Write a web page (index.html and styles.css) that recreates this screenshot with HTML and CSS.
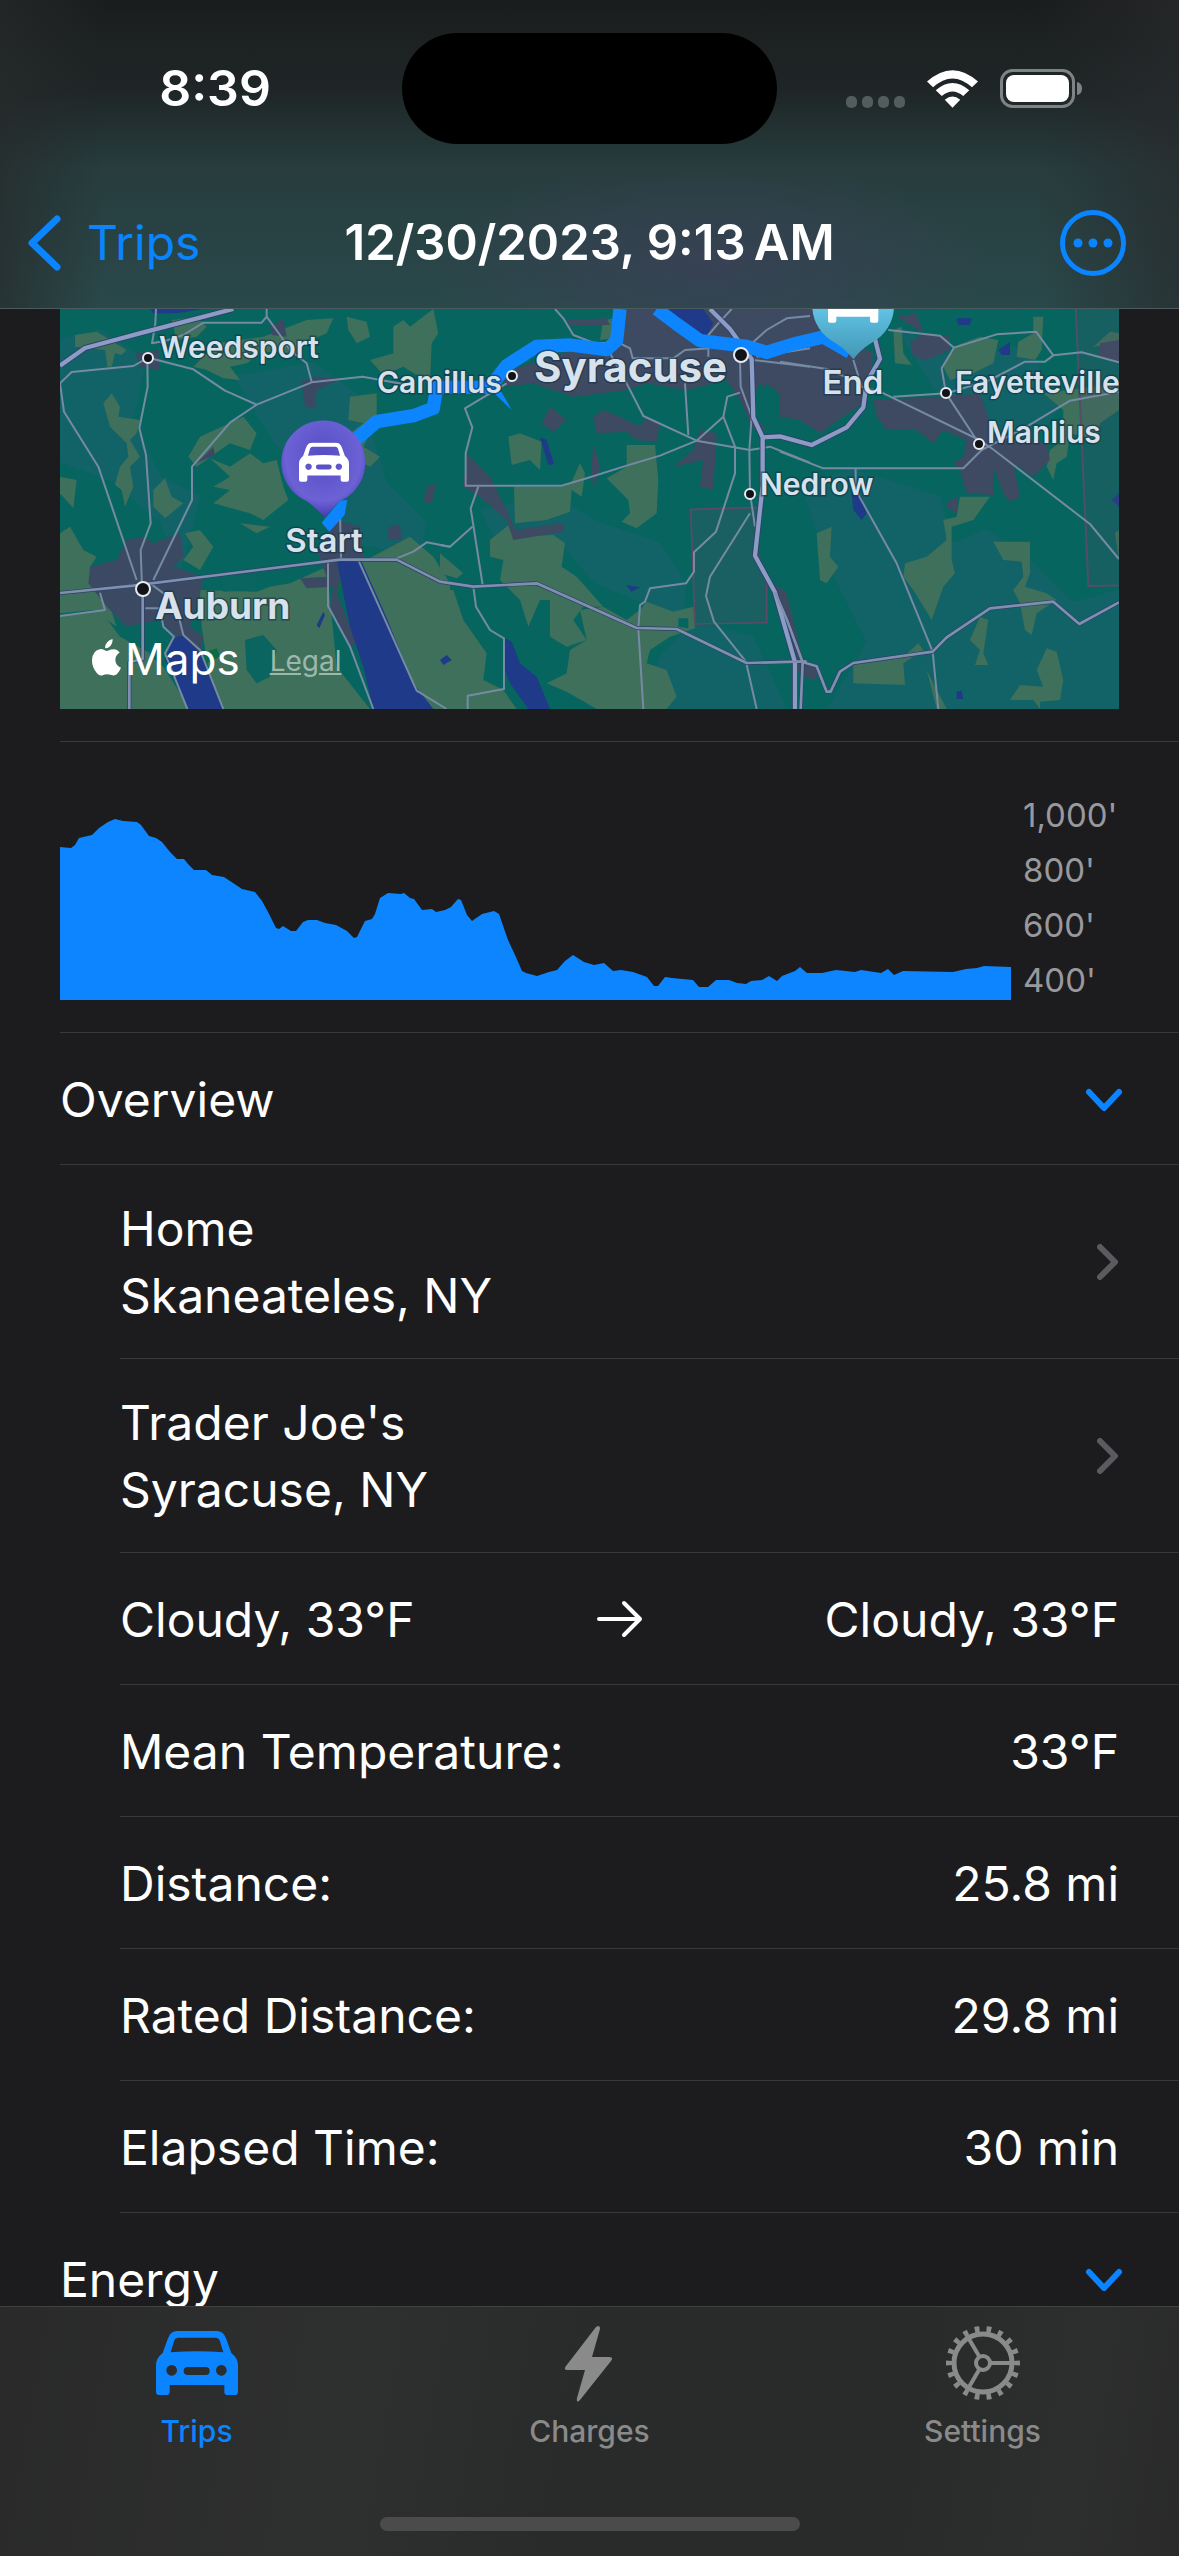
FILE: index.html
```html
<!DOCTYPE html>
<html lang="en">
<head>
    <meta charset="UTF-8">
    <meta name="viewport" content="width=device-width, initial-scale=1.0">
    <title>Trip Details</title>
    <link rel="stylesheet" href="styles.css">
</head>
<body>
    <!-- Shared icons -->
    <svg class="icon-defs" aria-hidden="true">
        <symbol id="icon-car" viewBox="0 0 246 192">
            <path fill-rule="evenodd" d="M0 182V102Q0 82 20 66L36 22Q44 0 64 0H182Q202 0 210 22L226 66Q246 82 246 102V182Q246 192 236 192H215Q205 192 205 182V162H41V182Q41 192 31 192H10Q0 192 0 182ZM44 64Q123 58 202 64L191 28Q188 20 180 20H66Q58 20 55 28ZM47 102a16 16 0 1 0 .1 0ZM196 102a16 16 0 1 0 .1 0ZM95 108H149a12 12 0 0 1 0 24H95a12 12 0 0 1 0-24Z"/>
        </symbol>
        <symbol id="icon-down" viewBox="0 0 38 25">
            <path d="M4 5L19 21L34 5" fill="none" stroke="currentColor" stroke-width="6" stroke-linecap="round" stroke-linejoin="round"/>
        </symbol>
        <symbol id="icon-right" viewBox="0 0 22 36">
            <path d="M3 3L18 18L3 33" fill="none" stroke="currentColor" stroke-width="6" stroke-linecap="round" stroke-linejoin="round"/>
        </symbol>
    </svg>

    <div class="app">
        <header class="header">
            <div class="status-bar">
                <span class="status-time">8:39</span>
                <div class="island"></div>
                <div class="status-icons">
                    <svg class="icon-signal" viewBox="0 0 59 12">
                        <rect x="0" y="0" width="11" height="12" rx="5"/>
                        <rect x="16" y="0" width="11" height="12" rx="5"/>
                        <rect x="32" y="0" width="11" height="12" rx="5"/>
                        <rect x="48" y="0" width="11" height="12" rx="5"/>
                    </svg>
                    <svg class="icon-wifi" viewBox="0 0 152 112">
                        <path d="M0 34Q76 -34 152 34L134 51Q76 -2 18 51Z"/>
                        <path d="M26 60Q76 16 126 60L108 77Q76 50 44 77Z"/>
                        <path d="M53 88Q76 68 99 88L76 112Z"/>
                    </svg>
                    <svg class="icon-battery" viewBox="0 0 82 39">
                        <rect x="1.5" y="1.5" width="72" height="36" rx="11" fill="none" stroke="#7e8485" stroke-width="3"/>
                        <rect x="6" y="6" width="63" height="27" rx="8"/>
                        <path d="M77 13Q82 14 82 19.500Q82 25 77 26Z" fill="#7e8485"/>
                    </svg>
                </div>
            </div>
            <nav class="nav-bar">
                <button type="button" class="back-btn">
                    <svg class="icon-back" viewBox="0 0 34 56">
                        <path d="M30 4L5 28L30 52" fill="none" stroke="currentColor" stroke-width="7" stroke-linecap="round" stroke-linejoin="round"/>
                    </svg>
                    Trips
                </button>
                <h1 class="nav-title">12/30/2023, 9:13&#8239;AM</h1>
                <button type="button" class="more-btn" aria-label="More">
                    <svg class="icon-more" viewBox="0 0 66 66">
                        <circle cx="33" cy="33" r="30.500" fill="none" stroke="currentColor" stroke-width="5"/>
                        <circle cx="18" cy="33" r="4.500"/>
                        <circle cx="33" cy="33" r="4.500"/>
                        <circle cx="48" cy="33" r="4.500"/>
                    </svg>
                </button>
            </nav>
        </header>

        <main class="content">
            <section class="map-row">
                <div class="map">
                    <svg class="map-canvas" viewBox="0 0 1059 400" preserveAspectRatio="xMidYMid slice">
                        <defs>
                            <radialGradient id="pinStart" cx=".5" cy=".38" r=".6">
                                <stop offset="0" stop-color="#564cc2"/>
                                <stop offset=".75" stop-color="#6c62d6"/>
                                <stop offset="1" stop-color="#4c3eb4"/>
                            </radialGradient>
                            <linearGradient id="pinEnd" x1="0" y1="0" x2="0" y2="1">
                                <stop offset="0" stop-color="#62c4e6"/>
                                <stop offset="1" stop-color="#4296b4"/>
                            </linearGradient>
                        </defs>
                        <rect width="1059" height="400" fill="#07655f"/>

                        <g transform="scale(.33333)">
                            <!-- Forest shading -->
                            <g fill="#15636a" opacity=".75">
                                <path d="M0 90L120 60L260 150L220 330L300 500L420 560L360 800L300 640L160 520L0 460Z"/>
                                <path d="M520 200L760 160L900 260L980 520L1100 640L1080 740L860 700L760 520L640 400Z"/>
                                <path d="M1260 600L1480 560L1620 640L1800 700L1880 820L1860 980L1740 880L1600 820L1500 700L1300 680Z"/>
                                <path d="M1900 940L2080 980L2180 1200L1740 1200L1800 1040Z"/>
                                <path d="M2220 520L2380 480L2640 560L2680 700L2780 660L2920 760L3040 880L3177 840V1200H2300L2420 1000L2300 760Z"/>
                                <path d="M2500 40L2700 160L2900 100L3000 300L2900 420L2740 380L2620 240Z"/>
                            </g>

                            <!-- West -->
                            <g transform="translate(-30 -27)">
                                <g fill="#3e705c">
                                    <path d="M75 105L140 95L230 150L215 165L195 160L185 200L172 200L165 150L75 140Z"/>
                                    <path d="M365 60L440 50L470 80L440 110L380 120Z"/>
                                    <path d="M430 200L500 130L640 110L770 60L850 55L830 100L760 130L740 160L640 155L590 190L540 200L570 240L520 235L470 210Z"/>
                                    <path d="M890 50L950 65L960 110L920 130L895 90Z"/>
                                    <path d="M1030 80L1060 60L1080 80L1150 27L1165 100L1145 130L1140 250L1060 200L1000 225L960 180L1030 160Z"/>
                                    <path d="M160 310L185 280L210 320L205 350L270 360L260 400L240 420L270 470L240 500L250 560L225 620L215 570L195 555L210 500L235 470L230 430L180 380Z"/>
                                    <path d="M310 570L345 535L365 590L400 610L345 655L310 620Z"/>
                                    <path d="M30 530L80 540L70 625L30 580Z"/>
                                    <path d="M540 500L600 460L640 490L680 480L700 560L715 600L640 660L600 640L490 610L540 570L490 560L540 530L480 475Z"/>
                                    <path d="M415 470L450 410L580 350L620 400L600 450L540 430L440 500Z"/>
                                    <path d="M405 700L450 690L490 740L450 810L400 780L430 740Z"/>
                                    <path d="M900 290L980 280L980 360L940 440L990 470L960 500L900 470L900 400L940 370L895 360Z"/>
                                    <path d="M570 670L660 680L620 700Z"/>
                                    <path d="M30 700L60 680L100 750L140 770L120 800L160 860L200 980L130 930L30 940Z"/>
                                    <path d="M30 945L150 930L210 1010L300 1060L290 1227H30Z"/>
                                    <path d="M290 1060L340 1100L420 1227H280Z"/>
                                    <path d="M450 870L620 875L660 860L720 850L830 800L860 1100L960 1227H510L470 1080L455 980Z"/>
                                    <path d="M930 790L1080 710L1150 770L1200 850V1227H1130L1060 1100Z"/>
                                </g>
                                <g fill="#0a645f">
                                    <path d="M585 1020L640 1005L680 1050L660 1130L620 1150L590 1110Z"/>
                                    <path d="M510 820L620 810L625 870L520 875Z"/>
                                </g>
                                <path fill="#0b6b45" d="M455 1060L500 1045L510 1070L470 1090ZM840 845L880 845L870 870L845 865Z"/>
                                <g fill="#3b4a62">
                                    <path d="M120 800L200 780L230 720L280 710L310 730L390 700L400 770L370 800L460 830L450 880L420 980L460 1010L450 1060L380 1010L330 960L230 980L170 920L115 850Z"/>
                                    <path d="M800 750L860 660L930 680L940 770L880 800L860 880L920 1030L900 1040L840 920L850 860L770 865L750 835L830 830Z"/>
                                    <path d="M255 160L325 150L330 210L270 200ZM660 80L700 55L710 110L665 105Z"/>
                                    <path d="M755 245L790 230L880 235L800 270L795 325L765 320ZM1015 680L1050 675L1055 720L1015 720ZM1130 560L1160 550L1145 610L1120 605ZM440 490L490 440L495 465Z"/>
                                </g>
                                <g fill="#1e3a88">
                                    <path d="M300 27H460L380 40L310 40Z"/>
                                    <path d="M860 780L935 785L1000 930L1090 1150L1150 1227H970L940 1100L900 980Z"/>
                                    <path d="M370 1015L400 1005L450 1060L520 1227H415L345 1080Z"/>
                                    <path d="M800 975L820 935L825 945L808 985ZM1175 1080L1200 1065V1095Z"/>
                                </g>
                            </g>

                            <!-- Center -->
                            <g transform="translate(1140 -27)">
                                <g fill="#3e705c">
                                    <path d="M490 60L560 50L600 70L560 110L480 120Z"/>
                                    <path d="M205 410L240 400L305 425L300 510L270 480L215 495Z"/>
                                    <path d="M560 435H645L655 540L650 640L590 685L545 665L570 640L565 600L500 535L560 500Z"/>
                                    <path d="M222 560L360 560L395 545L420 490L435 520L425 590L395 570L390 635L320 660L225 670Z"/>
                                    <path d="M150 720L205 675L220 710L340 705L375 730L365 800L410 830L490 920L430 920L400 960L440 1020L380 1040L330 1010L330 900L300 900L265 980L240 900L180 840L190 780L150 770Z"/>
                                    <path d="M0 760L70 820L50 835L0 820ZM0 870L40 870L70 960L140 1060L130 1140L190 1170L230 1227H0Z"/>
                                    <path d="M600 930L620 905L700 935L760 920L765 985L690 1010L630 1050L620 1090L680 1110L710 1190L680 1227H470L380 1175L320 1150L380 1120L390 1050L440 1020L420 930L490 920L560 960Z"/>
                                </g>
                                <path fill="#07655f" d="M715 955L745 955L745 985L715 980Z"/>
                                <g fill="#3e4a62">
                                    <path d="M560 27H1110V330L1060 300L1010 290L960 250L920 330L980 390L940 390L900 300L860 240L740 270L620 250L560 270L400 290L280 250L200 260L180 220L400 150L500 165L540 110Z"/>
                                    <path d="M460 350L490 330L540 350L600 380L620 350L660 365L650 425L590 420L560 395L470 400Z"/>
                                    <path d="M305 370L330 320L380 360L340 395ZM80 460L150 530L200 630L225 690L370 670L370 695L220 720L200 660L120 590L70 560Z"/>
                                    <path d="M780 390L830 400L820 570L780 560L790 480L700 500L760 450ZM460 430L480 500L460 570L455 500ZM380 60L500 55L510 75L390 75Z"/>
                                    <path d="M1000 850L1040 880L1060 960L1100 1130L1060 1100Z"/>
                                </g>
                                <g fill="#07655f">
                                    <path d="M980 250L1030 290L1010 360L960 320ZM780 290L840 270L840 300L790 310Z"/>
                                </g>
                                <g fill="#1e3a88">
                                    <path d="M670 27H790L820 70L800 110L700 60Z"/>
                                    <path d="M300 412L320 420L342 492L325 495ZM558 855L600 862L575 875Z"/>
                                    <path d="M195 1015L215 1025L240 1090L290 1130L330 1227H265L210 1150L190 1100ZM0 1080L20 1065L35 1080L10 1095Z"/>
                                </g>
                                <path fill="#54506a" fill-opacity=".25" stroke="#5d4a66" stroke-width="5" d="M752 628L960 622L945 740L980 830V968L765 972Z"/>
                            </g>

                            <!-- East -->
                            <g transform="translate(2160 -27)">
                                <g fill="#3e705c">
                                    <path d="M520 140L600 110L655 120L640 190L580 220L510 240L490 200Z"/>
                                    <path d="M760 50H790L785 150L765 180L710 170L715 125L760 100Z"/>
                                    <path d="M340 90L365 80L370 160L395 195L345 190ZM940 140L990 95L1017 100V130Z"/>
                                    <path d="M790 280L1017 250V330L960 370L950 420L870 400L860 470L830 490L820 540L800 500L810 450L850 420L850 330Z"/>
                                    <path d="M540 590H630L580 660L515 680L515 780L525 820L490 860L455 960L400 870L370 830L375 790L440 770L500 720L490 660L530 650Z"/>
                                    <path d="M640 725H750V820L735 860L800 880L830 900L770 940L755 1005L735 990L720 910L700 870L730 830L725 785L670 780Z"/>
                                    <path d="M110 700L155 680L150 770L175 800L140 850L120 840Z"/>
                                    <path d="M220 1090L370 1070L415 1030L430 1050L370 1090L375 1155L220 1150ZM600 950L625 960L610 1060L625 1095H585L600 1050L570 1020Z"/>
                                    <path d="M690 1200L720 1155L790 1160L770 1110L800 1045L830 1055L850 1140L840 1200L780 1205V1227L760 1200ZM440 1110L500 1227H470ZM1005 700L1017 690V780Z"/>
                                </g>
                                <g fill="#3e4a62">
                                    <path d="M0 27H140L200 120L280 160L260 300L120 400L60 360L0 350Z"/>
                                    <path d="M350 50L410 40L430 100L510 110L510 150L440 180L400 170L390 130L430 100Z"/>
                                    <path d="M280 300L490 290L600 280L640 400L800 430L810 480L760 530L700 490L720 590L690 605L670 580L640 500L640 585L560 580L540 510L520 490L550 470L560 420L490 390L460 430L410 390L320 390L290 350Z"/>
                                    <path d="M500 605L535 590L530 640L500 620ZM960 130L1017 120V190L960 170ZM60 1080L110 1100L110 1140L70 1130Z"/>
                                </g>
                                <g fill="#1e3a88">
                                    <path d="M530 55L575 55L570 75L535 75ZM655 150L690 125V165L665 165ZM215 580L245 590L260 640L245 660L220 630Z"/>
                                    <path d="M995 600L1017 580V620ZM530 1175L545 1172L550 1197H530Z"/>
                                </g>
                                <path fill="#54506a" fill-opacity=".2" stroke="#4f4f68" stroke-width="6" d="M887 20L925 858L1030 856V20Z"/>
                            </g>

                            <!-- Local roads -->
                            <g fill="none" stroke="#768ba3" stroke-width="6" stroke-linejoin="round">
                                <g transform="translate(-30 -27)">
                                    <path d="M318 27L316 70L306 130L330 125M330 128L400 105L460 68H635L650 50V27M650 50L690 105L720 150L770 190L785 245"/>
                                    <path d="M295 173L250 198L65 216L30 250L42 335L145 500L260 840"/>
                                    <path d="M292 173L293 260L268 385L288 465L302 670L272 750L276 860"/>
                                    <path d="M295 173L430 208L525 272L620 314L785 247L938 230L1080 256"/>
                                    <path d="M620 314L540 368L426 500V600L310 840"/>
                                    <path d="M30 948L165 930L150 878M286 925H330L340 980L372 1010L345 1060L412 1227M300 850L375 905L400 1005L450 1050L520 1227"/>
                                    <path d="M870 640L873 775M834 780V918L900 1040L970 1227M925 780L1090 1150L1100 1172L1190 1227M1040 775L1090 755L1130 727L1200 740"/>
                                </g>
                                <g transform="translate(1140 -27)">
                                    <path d="M345 27L370 55L400 105L460 128L540 130L570 145L578 175H700L735 150L810 145M805 170V105L835 70L875 27"/>
                                    <path d="M200 250L75 325L97 382L77 460V557H365L440 535L560 497L660 467L770 422L850 350L862 290L900 278"/>
                                    <path d="M510 160L560 250L610 348L770 422L930 450L990 440L1110 488M735 250L745 405"/>
                                    <path d="M850 350L885 440V520L828 695L762 757V815L738 850L630 865L615 905L600 915L595 985L610 1227"/>
                                    <path d="M115 560L92 625L128 855M97 680L30 740L0 735M100 860L108 920L150 990L192 1015V1167L83 1187V1227"/>
                                    <path d="M930 640L810 830L798 888L822 965L918 1085L950 1227M900 180L902 260L935 350L928 450L930 580L945 680"/>
                                    <path d="M930 135L980 90L1040 55L1110 48M940 180L1110 200M950 170L1110 145"/>
                                </g>
                                <g transform="translate(2160 -27)">
                                    <path d="M325 90L480 107L522 143L485 205L498 280L590 420M522 143L650 103L768 95L820 166L795 185H735L630 240L500 280L340 290"/>
                                    <path d="M820 166L905 157L1017 187M300 275L598 420L635 445L930 672L1017 777"/>
                                    <path d="M0 455L130 505H550L605 450L740 380L870 302L1017 275M220 180L245 260L300 275"/>
                                    <path d="M227 505V570L350 790L458 1055L475 1227M0 185L140 207L220 240"/>
                                </g>
                            </g>

                            <!-- Highways -->
                            <g fill="none" stroke-linejoin="round">
                                <g stroke="#2f3f68" stroke-width="18">
                                    <path d="M0 170L75 117L250 70L520 0"/>
                                    <path d="M0 852L220 830L840 752H1010L1140 818L1240 833L1430 823L1730 957L1850 960L2060 1062L2240 1057" stroke-width="12"/>
                                    <path d="M2225 1058L2270 1072L2300 1148H2312L2340 1088L2380 1062L2618 1028L2660 985L2790 898L2980 878L3058 945L3177 880" stroke-width="12"/>
                                    <path d="M248 850V1050L208 1060V1200" stroke-width="12"/>
                                    <path d="M1950 0L2010 60L2060 130L2075 150L2080 325L2108 385V530L2085 740L2145 850L2205 1060V1200"/>
                                    <path d="M2108 385L2160 382L2255 408L2360 355L2410 295L2420 220L2460 150L2445 90"/>
                                    <path d="M2145 850L2180 930L2228 1060L2222 1200" stroke-width="11"/>
                                </g>
                                <g stroke="#8c9cc4" stroke-width="13">
                                    <path d="M0 170L75 117L250 70L520 0"/>
                                    <path d="M1950 0L2010 60L2060 130L2075 150L2080 325L2108 385V530L2085 740L2145 850L2205 1060V1200"/>
                                    <path d="M2108 385L2160 382L2255 408L2360 355L2410 295L2420 220L2460 150L2445 90"/>
                                </g>
                                <g stroke="#7f90af" stroke-width="8">
                                    <path d="M0 852L220 830L840 752H1010L1140 818L1240 833L1430 823L1730 957L1850 960L2060 1062L2240 1057"/>
                                    <path d="M2225 1058L2270 1072L2300 1148H2312L2340 1088L2380 1062L2618 1028L2660 985L2790 898L2980 878L3058 945L3177 880"/>
                                    <path d="M248 850V1050L208 1060V1200"/>
                                    <path d="M2145 850L2180 930L2228 1060L2222 1200"/>
                                </g>
                            </g>

                            <!-- Route -->
                            <g fill="none" stroke="#0d85ff" stroke-width="40" stroke-linejoin="round">
                                <path d="M880 398L950 338L1060 320L1120 298L1130 235L1290 235L1340 170L1430 112L1530 108L1640 122L1670 95L1680 0"/>
                                <path d="M1790 0L1850 45L1920 95L2060 112L2120 130L2200 105L2290 84L2370 130"/>
                            </g>
                            <path fill="#0d85ff" d="M1290 240L1355 303L1325 250Z"/>

                            <!-- Start pin, with the first leg of the route over its tip -->
                            <g transform="translate(-30 -27)">
                                <path fill="url(#pinStart)" d="M825 652Q800 625 770 603A126 126 0 1 1 870 603Q846 625 825 652Z"/>
                                <use href="#icon-car" x="747" y="427" width="150" height="119" fill="#fff"/>
                                <path fill="#0d85ff" d="M815 668L838 695L884 644L892 600L870 602Z"/>
                            </g>

                            <!-- End pin -->
                            <g transform="translate(2160 -27)">
                                <path fill="url(#pinEnd)" d="M220 178Q200 150 165 128A124 124 0 0 1 97 20H342A124 124 0 0 1 275 128Q240 150 220 178Z"/>
                                <path fill="#fff" d="M144 20H295V62Q295 68 289 68H276Q270 68 270 62V50H169V62Q169 68 163 68H150Q144 68 144 62Z"/>
                            </g>
                        </g>

                        <!-- Towns -->
                        <g fill="#111316" stroke="#e6eaf2" stroke-width="2">
                            <circle cx="88" cy="49" r="5"/>
                            <circle cx="452" cy="67" r="5"/>
                            <circle cx="690" cy="185" r="5"/>
                            <circle cx="886" cy="84" r="5"/>
                            <circle cx="919" cy="135" r="5"/>
                            <circle cx="83" cy="280" r="7"/>
                            <circle cx="681" cy="46" r="7"/>
                        </g>
                        <g class="map-label">
                            <text x="99" y="49">Weedsport</text>
                            <text x="317" y="84">Camillus</text>
                            <text x="700" y="186">Nedrow</text>
                            <text x="895" y="84">Fayetteville</text>
                            <text x="927" y="134">Manlius</text>
                        </g>
                        <g class="map-label map-label-pin">
                            <text x="264" y="243">Start</text>
                            <text x="793" y="85">End</text>
                        </g>
                        <text class="map-label map-label-town" x="95" y="310">Auburn</text>
                        <text class="map-label map-label-city" x="474" y="73">Syracuse</text>
                    </svg>
                    <div class="map-attribution">
                        <span class="map-brand">
                            <svg class="icon-apple" viewBox="0 0 88 112">
                                <path d="M62 0Q64 12 56 21Q48 29 40 28Q39 18 46 10Q52 2 62 0ZM43 36Q50 36 58 32Q74 27 84 41Q70 50 71 65Q72 80 88 87Q83 99 76 106Q69 113 58 109Q45 104 34 109Q24 114 15 104Q0 86 0 64Q1 34 26 30Q34 30 43 36Z"/>
                            </svg>
                            Maps
                        </span>
                        <a class="map-legal" href="#">Legal</a>
                    </div>
                </div>
            </section>

            <section class="chart-row">
                <svg class="chart" viewBox="0 0 951 200" preserveAspectRatio="none">
                    <path d="M0 47L11 48L15 45L19 38L32 35L39 28L48 22L55 19L63 21L77 22L81 25L89 36L96 38L102 42L110 52L117 59L124 59L128 64L134 70L146 70L152 75L164 77L182 89L195 92L202 101L208 112L216 128L219 129L223 126L231 131L236 131L243 122L248 120L257 120L265 123L276 125L287 131L294 138L297 137L305 121L312 119L315 114L320 98L328 93L341 94L344 93L350 98L354 99L362 110L372 109L376 112L385 110L391 107L398 99L401 100L407 115L412 121L422 114L434 111L439 114L448 140L455 155L462 171L466 173L477 176L489 172L497 170L505 161L513 155L524 162L534 165L544 163L553 171L561 170L573 172L587 177L594 186L598 186L605 177L612 178L633 180L639 187L648 187L656 180L669 180L677 183L686 184L691 181L702 180L709 176L717 181L722 176L735 171L740 167L747 173L762 173L776 170L795 172L801 170L821 173L828 169L834 175L843 171L893 172L906 169L917 168L924 166L951 167V200H0Z"/>
                </svg>
                <div class="chart-axis">
                    <span>1,000'</span>
                    <span>800'</span>
                    <span>600'</span>
                    <span>400'</span>
                </div>
            </section>

            <section>
                <button type="button" class="row section-header">
                    Overview
                    <svg class="icon-down"><use href="#icon-down"/></svg>
                </button>
                <div class="details">
                    <a class="row" href="#">
                        <span>Home<br>Skaneateles, NY</span>
                        <svg class="icon-right"><use href="#icon-right"/></svg>
                    </a>
                    <a class="row" href="#">
                        <span>Trader Joe's<br>Syracuse, NY</span>
                        <svg class="icon-right"><use href="#icon-right"/></svg>
                    </a>
                    <div class="row">
                        <span>Cloudy, 33°F</span>
                        <svg class="icon-arrow" viewBox="0 0 46 38">
                            <path d="M2 19H43M27 3L43 19L27 35" fill="none" stroke="currentColor" stroke-width="4" stroke-linecap="round" stroke-linejoin="round"/>
                        </svg>
                        <span>Cloudy, 33°F</span>
                    </div>
                    <div class="row">
                        <span>Mean Temperature:</span>
                        <span>33°F</span>
                    </div>
                    <div class="row">
                        <span>Distance:</span>
                        <span>25.8 mi</span>
                    </div>
                    <div class="row">
                        <span>Rated Distance:</span>
                        <span>29.8 mi</span>
                    </div>
                    <div class="row">
                        <span>Elapsed Time:</span>
                        <span>30 min</span>
                    </div>
                </div>
            </section>

            <section>
                <button type="button" class="row section-header">
                    Energy
                    <svg class="icon-down"><use href="#icon-down"/></svg>
                </button>
            </section>
        </main>

        <footer class="tab-bar">
            <nav class="tabs">
                <a class="tab active" href="#">
                    <svg class="tab-icon"><use href="#icon-car" x="0" y="7" width="82" height="64"/></svg>
                    Trips
                </a>
                <a class="tab" href="#">
                    <svg class="tab-icon" viewBox="0 0 82 78">
                        <path d="M47 3L17 42Q14 46 19 46H36L28 74Q27 80 31 76L62 37Q65 33 60 33H43L51 5Q51 0 47 3Z"/>
                    </svg>
                    Charges
                </a>
                <a class="tab" href="#">
                    <svg class="tab-icon" viewBox="0 0 82 78">
                        <g fill="none" stroke="currentColor">
                            <circle cx="41" cy="39" r="29" stroke-width="5"/>
                            <circle cx="41" cy="39" r="34" stroke-width="6" pathLength="180" stroke-dasharray="4 6" stroke-dashoffset="2"/>
                            <circle cx="41" cy="39" r="7" stroke-width="4"/>
                            <path d="M49 39H69M37 32L27 15M37 46L27 63" stroke-width="4"/>
                        </g>
                    </svg>
                    Settings
                </a>
            </nav>
            <div class="home-indicator"></div>
        </footer>
    </div>
</body>
</html>
```
FILE: styles.css
```css
* {
    margin: 0;
    padding: 0;
    box-sizing: border-box;
}

body {
    font-family: Inter, 'Liberation Sans', sans-serif;
    font-size: 48px;
    line-height: 67px;
    background: #1c1c1e;
    color: #ffffff;
}

a {
    color: inherit;
    text-decoration: none;
}

button {
    background: none;
    border: none;
    font: inherit;
    color: inherit;
    text-align: left;
    cursor: pointer;
}

svg {
    display: block;
    fill: currentColor;
    flex-shrink: 0;
}

.icon-defs {
    display: none;
}

.app {
    display: flex;
    flex-direction: column;
    height: 100vh;
}

/* Header */
.header {
    flex-shrink: 0;
    border-bottom: 1px solid #4a5a5e;
    background:
        linear-gradient(90deg, rgba(38, 42, 42, 0.7) 0%, transparent 9%, transparent 88%, rgba(40, 42, 44, 0.7) 100%),
        radial-gradient(ellipse at 60% 85%, rgba(62, 64, 90, 0.7) 0%, transparent 28%),
        linear-gradient(180deg, #1b1d1d 0%, #1f2627 30%, #273d3e 55%, #2a494b 100%);
}

.status-bar {
    display: grid;
    grid-template-columns: 1fr 375px 1fr;
    align-items: center;
    justify-items: center;
    height: 177px;
    padding: 0 28px;
}

.status-time {
    font-size: 50px;
    font-weight: 600;
}

.island {
    width: 100%;
    height: 111px;
    border-radius: 56px;
    background: #000000;
}

.status-icons {
    display: flex;
    align-items: flex-end;
    gap: 22px;
}

.icon-signal {
    width: 59px;
    height: 12px;
    color: #535d5e;
}

.icon-wifi {
    width: 51px;
    height: 38px;
}

.icon-battery {
    width: 82px;
    height: 39px;
}

.nav-bar {
    display: grid;
    grid-template-columns: 1fr auto 1fr;
    align-items: center;
    height: 131px;
    padding: 0 27px;
}

.back-btn {
    display: flex;
    align-items: center;
    gap: 26px;
    color: #0a84ff;
}

.icon-back {
    width: 34px;
    height: 56px;
}

.nav-title {
    font-size: 49px;
    font-weight: 600;
}

.more-btn {
    justify-self: end;
    padding-right: 26px;
    color: #0a84ff;
}

.icon-more {
    width: 66px;
    height: 66px;
}

/* Scrolling content */
.content {
    flex: 1;
    min-height: 0;
    overflow: hidden;
    padding-left: 60px;
}

.map-row {
    padding: 0 60px 32px 0;
    border-bottom: 1px solid #39393c;
}

.map {
    position: relative;
    height: 400px;
    overflow: hidden;
}

.map-canvas {
    width: 100%;
    height: 100%;
}

.map-label {
    font-size: 30px;
    font-weight: 600;
    fill: #d8e2ec;
    stroke: rgba(20, 50, 70, 0.6);
    stroke-width: 3px;
    paint-order: stroke;
}

.map-label-pin {
    font-size: 33px;
    text-anchor: middle;
}

.map-label-town {
    font-size: 37px;
    font-weight: 700;
}

.map-label-city {
    font-size: 42px;
    font-weight: 700;
}

.map-attribution {
    position: absolute;
    left: 32px;
    bottom: 14px;
    display: flex;
    align-items: center;
    gap: 30px;
}

.map-brand {
    display: flex;
    align-items: center;
    gap: 4px;
    font-size: 44px;
}

.icon-apple {
    width: 29px;
    height: 37px;
    margin-bottom: 4px;
}

.map-legal {
    padding-top: 4px;
    font-size: 28px;
    color: #9db8ab;
    text-decoration: underline;
}

/* Elevation chart */
.chart-row {
    display: flex;
    align-items: flex-end;
    gap: 12px;
    padding: 46px 0 24px;
    border-bottom: 1px solid #39393c;
}

.chart {
    flex: 1;
    min-width: 0;
    height: 200px;
    margin-bottom: 8px;
    color: #0d85ff;
}

.chart-axis {
    display: flex;
    flex-direction: column;
    width: 156px;
    font-size: 33px;
    line-height: 55px;
    color: #98989d;
}

/* Rows */
.row {
    display: flex;
    align-items: center;
    justify-content: space-between;
    width: 100%;
    min-height: 132px;
    padding: 30px 60px 29px 0;
    border-bottom: 1px solid #39393c;
}

.section-header {
    padding-right: 56px;
}

.details {
    padding-left: 60px;
}

.icon-down {
    width: 38px;
    height: 25px;
    color: #0a84ff;
}

.icon-right {
    width: 22px;
    height: 36px;
    color: #5b5b5f;
}

.icon-arrow {
    width: 46px;
    height: 38px;
}

/* Tab bar */
.tab-bar {
    flex-shrink: 0;
    border-top: 1px solid #414142;
    background: linear-gradient(100deg, #2a2a2a 0%, #2e2f2f 30%, #292a2a 50%, #292a2a 75%, #2d2e2e 90%, #2a2a2a 100%);
    padding: 17px 0 25px;
}

.tabs {
    display: grid;
    grid-template-columns: repeat(3, 1fr);
}

.tab {
    display: flex;
    flex-direction: column;
    align-items: center;
    gap: 9px;
    font-size: 30px;
    font-weight: 500;
    line-height: 40px;
    color: #8a8a8a;
}

.tab.active {
    color: #0a84ff;
}

.tab-icon {
    width: 82px;
    height: 78px;
}

.home-indicator {
    width: 420px;
    height: 14px;
    margin: 66px auto 0;
    border-radius: 7px;
    background: #4b4b4b;
}
```
